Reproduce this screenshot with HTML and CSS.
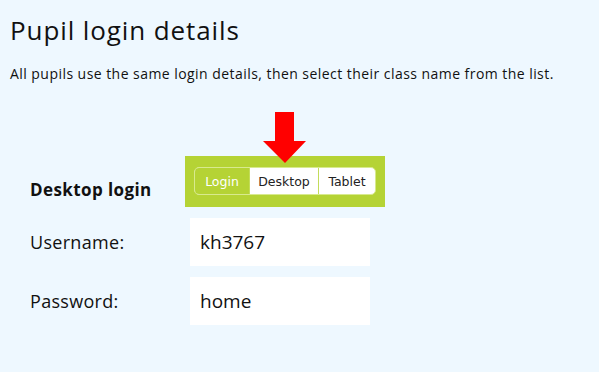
FILE: index.html
```html
<!DOCTYPE html>
<html lang="en">
<head>
    <meta charset="UTF-8">
    <meta name="viewport" content="width=device-width, initial-scale=1.0">
    <title>Pupil login details</title>
    <link rel="stylesheet" href="styles.css">
</head>
<body>
    <h1>Pupil login details</h1>
    <p class="intro">All pupils use the same login details, then select their class name from the list.</p>

    <div class="details">
        <div class="label heading">Desktop login</div>
        <div class="tabs-wrap">
            <!-- arrow pointing at the Desktop tab -->
            <svg class="arrow" width="44" height="52" viewBox="0 0 44 52">
                <polygon points="12,0 31,0 31,29 43,29 22,51 0,29 12,29" fill="#ff0000"/>
            </svg>
            <div class="tabs">
                <span class="tab active">Login</span>
                <span class="tab">Desktop</span>
                <span class="tab">Tablet</span>
            </div>
        </div>

        <div class="label">Username:</div>
        <div class="value">kh3767</div>

        <div class="label">Password:</div>
        <div class="value">home</div>
    </div>
</body>
</html>
```

FILE: styles.css
```css
body {
    font-family: "Open Sans", Arial, sans-serif;
    margin: 0;
    padding: 0 10px;
    background-color: #eef8ff;
    color: #111;
}
h1 {
    font-size: 26px;
    font-weight: 400;
    letter-spacing: 0.9px;
    margin: 14px 0 0;
    line-height: 32px;
}
.intro {
    font-size: 14px;
    letter-spacing: 0.45px;
    margin: 18px 0 0;
    line-height: 20px;
}
.details {
    display: grid;
    grid-template-columns: 155px 185px;
    row-gap: 11px;
    margin: 72px 0 0 20px;
    align-items: center;
}
.label {
    font-size: 18px;
    letter-spacing: 0.3px;
}
.label.heading {
    font-weight: 700;
    font-size: 17px;
    letter-spacing: 0.4px;
    padding-top: 15px;
}
.tabs-wrap {
    position: relative;
    background-color: #b5d335;
    width: 200px;
    height: 51px;
    box-sizing: border-box;
    padding: 11px 9px;
}
.arrow {
    position: absolute;
    left: 78px;
    top: -44px;
}
.tabs {
    display: flex;
    width: 182px;
    height: 28px;
    box-sizing: border-box;
    background: #fff;
    border: 1px solid #d8ea8e;
    border-radius: 5px;
    overflow: hidden;
    font-family: "DejaVu Sans", Verdana, sans-serif;
    font-size: 12.5px;
}
.tab {
    display: flex;
    align-items: center;
    justify-content: center;
    color: #222;
    border-left: 1px solid #c3dc5a;
    padding: 0;
}
.tab:first-child {
    border-left: none;
}
.tab.active {
    background: #b5d335;
    color: #fff;
    width: 54px;
}
.tab:nth-child(2) {
    width: 68px;
}
.tab:nth-child(3) {
    flex: 1;
}
.value {
    background: #fff;
    width: 180px;
    height: 48px;
    box-sizing: border-box;
    padding: 0 10px;
    display: flex;
    align-items: center;
    font-size: 19px;
    margin-left: 5px;
}
```
